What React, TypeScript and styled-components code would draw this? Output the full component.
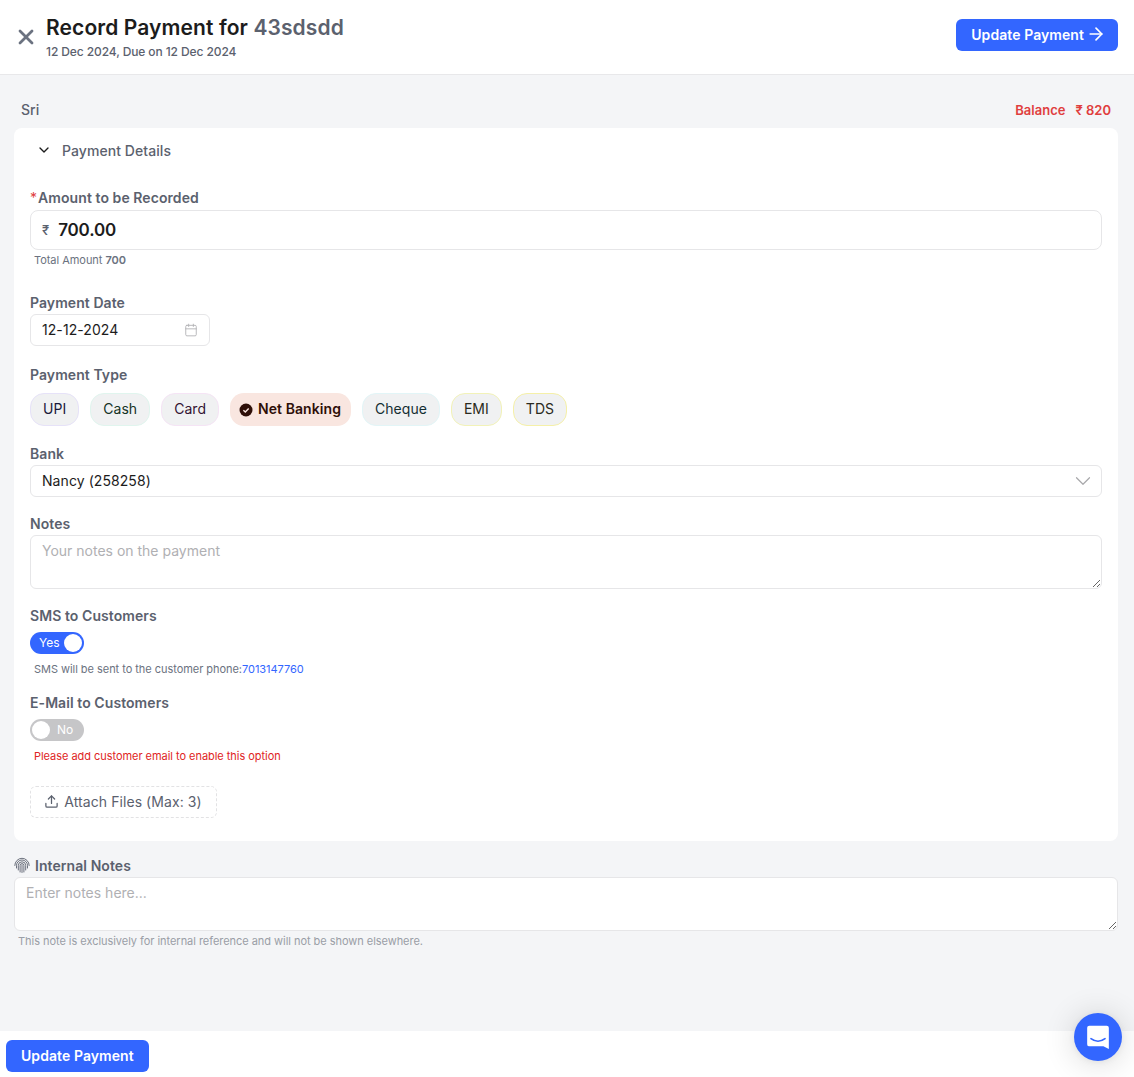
import React from "react";
import styled, { createGlobalStyle } from "styled-components";
import { ArrowRight, Calendar, ChevronDown, Upload, X } from "lucide-react";

const GlobalStyle = createGlobalStyle`
  * {
    box-sizing: border-box;
  }
  body {
    margin: 0;
    background: #f4f5f7;
    font-family: Inter, "Noto Sans", sans-serif;
    color: #1f1f1f;
  }
  input, textarea {
    font-family: Inter, "Noto Sans", sans-serif;
  }
  ::placeholder {
    color: #b0b0b3;
    opacity: 1;
  }
`;

const Page = styled.div`
  height: 1077px;
  display: flex;
  flex-direction: column;
  overflow: hidden;
  position: relative;
`;

const Header = styled.header`
  height: 75px;
  flex-shrink: 0;
  background: #fff;
  border-bottom: 1px solid #e8e8ea;
  display: flex;
  align-items: center;
  padding: 0 16px 0 14px;
`;

const CloseIcon = styled(X)`
  color: #6b7280;
  margin-right: 8px;
  margin-top: -1px;
`;

const TitleBlock = styled.div`
  flex: 1;
`;

const Title = styled.h1`
  margin: 0;
  font-size: 21px;
  line-height: 28px;
  font-weight: 600;
  letter-spacing: 0.1px;
  color: #1c1c1c;
`;

const TitleName = styled.span`
  color: #5b616e;
`;

const Subtitle = styled.div`
  margin-top: 2px;
  font-size: 12px;
  line-height: 16px;
  font-weight: 500;
  letter-spacing: -0.1px;
  color: #5b616e;
`;

const PrimaryButton = styled.button`
  height: 32px;
  padding: 0 15px 2px;
  display: inline-flex;
  align-items: center;
  border: none;
  border-radius: 6px;
  background: #3366ff;
  color: #fff;
  font-family: inherit;
  font-size: 14px;
  font-weight: 600;
  letter-spacing: 0.07px;
`;

const HeaderButton = styled(PrimaryButton)`
  gap: 2px;
  padding-right: 12px;
  margin-top: -4px;
`;

const Main = styled.main`
  flex: 1;
  padding: 0 16px 0 14px;
`;

const SummaryRow = styled.div`
  height: 53px;
  padding: 17px 7px 0;
  display: flex;
  justify-content: space-between;
  align-items: center;
`;

const CustomerName = styled.span`
  margin-top: -2px;
  font-size: 14px;
  font-weight: 500;
  color: #5b616e;
`;

const Balance = styled.span`
  font-size: 13px;
  font-weight: 600;
  color: #e03e3e;
  display: flex;
  gap: 10px;
`;

const Card = styled.section`
  background: #fff;
  border-radius: 8px;
  height: 713px;
  padding: 0 16px;
  letter-spacing: 0.07px;
`;

const SectionToggle = styled.div`
  height: 44px;
  padding-left: 6px;
  display: flex;
  align-items: center;
  gap: 10px;
  font-size: 14px;
  font-weight: 500;
  color: #5b616e;
`;

const ToggleIcon = styled(ChevronDown)`
  color: #1c1c1c;
`;

const Label = styled.label<{ $top: number }>`
  display: block;
  margin-top: ${(p) => p.$top}px;
  font-size: 14px;
  line-height: 20px;
  font-weight: 600;
  letter-spacing: 0.07px;
  color: #5b616e;
`;

const Required = styled.span`
  color: #e03e3e;
  font-weight: 400;
  margin-right: 1px;
`;

const AmountField = styled.div`
  height: 40px;
  margin-top: 2px;
  padding: 0 11px;
  border: 1px solid #e6e6e8;
  border-radius: 8px;
  display: flex;
  align-items: center;
  gap: 9px;
`;

const Rupee = styled.span`
  font-size: 13px;
  font-weight: 500;
  color: #5b616e;
`;

const AmountInput = styled.input`
  flex: 1;
  border: none;
  outline: none;
  padding: 0;
  font-size: 17px;
  font-weight: 600;
  letter-spacing: -0.2px;
  color: #1c1c1c;
`;

const Hint = styled.div<{ $tone?: "error"; $top: number }>`
  margin-top: ${(p) => p.$top}px;
  padding-left: 4px;
  font-size: 11px;
  line-height: 14px;
  letter-spacing: -0.04px;
  color: ${(p) => (p.$tone === "error" ? "#e02424" : "#6b7280")};
`;

const Strong = styled.b`
  font-weight: 600;
`;

const Phone = styled.span`
  color: #3366ff;
`;

const DateField = styled.div`
  width: 180px;
  height: 32px;
  margin-top: 1px;
  padding: 0 11px 2px;
  border: 1px solid #e6e6e8;
  border-radius: 6px;
  display: flex;
  align-items: center;
  justify-content: space-between;
  font-size: 14px;
  color: #1c1c1c;
`;

const CalendarIcon = styled(Calendar)`
  color: #b0b0b3;
  margin-bottom: -2px;
`;

const PillRow = styled.div`
  display: flex;
  gap: 11px;
  margin-top: 8px;
`;

const Pill = styled.div<{ $ring: string; $text: string }>`
  height: 33px;
  padding: 0 12px 2px;
  border-radius: 14px;
  display: flex;
  align-items: center;
  background: #f0f1f2;
  border: 1px solid ${(p) => p.$ring};
  color: ${(p) => p.$text};
  font-size: 14px;
  letter-spacing: 0.04px;
`;

const ActivePill = styled.div`
  height: 33px;
  padding: 0 10px 2px 9px;
  border-radius: 14px;
  display: flex;
  align-items: center;
  gap: 5px;
  background: #f9e6e0;
  color: #2e0f08;
  font-size: 14px;
  font-weight: 600;
`;

const CheckDot = styled.svg`
  width: 14px;
  height: 14px;
  margin-bottom: -2px;
`;

const SelectField = styled.div`
  height: 32px;
  margin-top: 1px;
  padding: 0 11px 2px;
  border: 1px solid #e6e6e8;
  border-radius: 6px;
  display: flex;
  align-items: center;
  justify-content: space-between;
  font-size: 14px;
  color: #1c1c1c;
`;

const SelectIcon = styled(ChevronDown)`
  color: #a8a8ab;
  margin-right: -6px;
  margin-bottom: -2px;
`;

const NoteArea = styled.textarea<{ $mt: number }>`
  display: block;
  width: 100%;
  height: 54px;
  margin-top: ${(p) => p.$mt}px;
  padding: 5px 11px;
  border: 1px solid #e6e6e8;
  border-radius: 6px;
  outline: none;
  font-size: 14px;
  line-height: 20px;
  background: #fff;
`;

const Switch = styled.div<{ $on: boolean }>`
  position: relative;
  width: 54px;
  height: 22px;
  margin-top: 6px;
  border-radius: 11px;
  background: ${(p) => (p.$on ? "#3366ff" : "#c6c6c8")};
  color: #fff;
  font-size: 12px;
  line-height: 22px;
  padding: ${(p) => (p.$on ? "0 0 0 9px" : "0 0 0 27px")};
`;

const SwitchThumb = styled.span<{ $on: boolean }>`
  position: absolute;
  top: 2px;
  left: ${(p) => (p.$on ? "34px" : "2px")};
  width: 18px;
  height: 18px;
  border-radius: 50%;
  background: #fff;
`;

const AttachButton = styled.div`
  width: 187px;
  height: 32px;
  margin-top: 23px;
  padding: 0 1px 2px 0;
  border: 1px dashed #e2e2e4;
  border-radius: 6px;
  display: flex;
  align-items: center;
  justify-content: center;
  gap: 5px;
  font-size: 14px;
  color: #5b616e;
`;

const InternalTitle = styled.div`
  height: 36px;
  padding-top: 13px;
  display: flex;
  align-items: center;
  gap: 5px;
  font-size: 14px;
  font-weight: 600;
  letter-spacing: 0.07px;
  color: #5b616e;
`;

const FingerprintMark = styled.svg`
  width: 16px;
  height: 16px;
  margin-top: -2px;
`;

const InternalHint = styled.div`
  margin-top: 3px;
  padding-left: 4px;
  font-size: 11px;
  line-height: 14px;
  letter-spacing: -0.04px;
  color: #9a9ea6;
`;

const Footer = styled.footer`
  height: 46px;
  flex-shrink: 0;
  background: #fff;
  padding: 9px 6px 0;
`;

const ChatBubble = styled.div`
  position: absolute;
  right: 12px;
  bottom: 16px;
  width: 48px;
  height: 48px;
  border-radius: 50%;
  background: #3366ff;
  box-shadow: 0 1px 6px rgba(0, 0, 0, 0.06), 0 2px 32px rgba(0, 0, 0, 0.16);
  display: flex;
  align-items: center;
  justify-content: center;
`;

const pills = [
  { name: "UPI", ring: "#e6e2f8", text: "#1a1a3a" },
  { name: "Cash", ring: "#e0f5ee", text: "#143326" },
  { name: "Card", ring: "#f5e4f5", text: "#331433" },
  { name: "Net Banking" },
  { name: "Cheque", ring: "#e2f5f7", text: "#142e33" },
  { name: "EMI", ring: "#f2f2b8", text: "#2a2a20" },
  { name: "TDS", ring: "#f5f0a8", text: "#2a2a20" },
];

export default function App() {
  return (
    <Page>
      <GlobalStyle />
      <Header>
        <CloseIcon size={24} strokeWidth={2.8} />
        <TitleBlock>
          <Title>
            Record Payment for <TitleName>43sdsdd</TitleName>
          </Title>
          <Subtitle>12 Dec 2024, Due on 12 Dec 2024</Subtitle>
        </TitleBlock>
        <HeaderButton>
          Update Payment <ArrowRight size={20} strokeWidth={2} />
        </HeaderButton>
      </Header>

      <Main>
        <SummaryRow>
          <CustomerName>Sri</CustomerName>
          <Balance>
            <span>Balance</span>
            <span>₹ 820</span>
          </Balance>
        </SummaryRow>

        <Card>
          <SectionToggle>
            <ToggleIcon size={16} strokeWidth={2} />
            Payment Details
          </SectionToggle>

          <Label $top={16}>
            <Required>*</Required>Amount to be Recorded
          </Label>
          <AmountField>
            <Rupee>₹</Rupee>
            <AmountInput defaultValue="700.00" />
          </AmountField>
          <Hint $top={3}>
            Total Amount <Strong>700</Strong>
          </Hint>

          <Label $top={26}>Payment Date</Label>
          <DateField>
            12-12-2024
            <CalendarIcon size={14} strokeWidth={1.5} />
          </DateField>

          <Label $top={19}>Payment Type</Label>
          <PillRow>
            {pills.map((p) =>
              p.ring ? (
                <Pill key={p.name} $ring={p.ring} $text={p.text}>
                  {p.name}
                </Pill>
              ) : (
                <ActivePill key={p.name}>
                  <CheckDot viewBox="0 0 14 14">
                    <circle cx="7" cy="7" r="6.5" fill="#2e0f08" />
                    <path d="M4.4 7.2l1.9 1.8 3.4-3.6" fill="none" stroke="#f9e6e0" strokeWidth="1.4" />
                  </CheckDot>
                  {p.name}
                </ActivePill>
              )
            )}
          </PillRow>

          <Label $top={18}>Bank</Label>
          <SelectField>
            Nancy (258258)
            <SelectIcon size={26} strokeWidth={1.1} />
          </SelectField>

          <Label $top={17}>Notes</Label>
          <NoteArea $mt={1} placeholder="Your notes on the payment" />

          <Label $top={17}>SMS to Customers</Label>
          <Switch $on>
            Yes
            <SwitchThumb $on />
          </Switch>
          <Hint $top={8}>
            SMS will be sent to the customer phone:<Phone>7013147760</Phone>
          </Hint>

          <Label $top={17}>E-Mail to Customers</Label>
          <Switch $on={false}>
            No
            <SwitchThumb $on={false} />
          </Switch>
          <Hint $top={8} $tone="error">
            Please add customer email to enable this option
          </Hint>

          <AttachButton>
            <Upload size={15} strokeWidth={2} />
            Attach Files (Max: 3)
          </AttachButton>
        </Card>

        <InternalTitle>
          <FingerprintMark viewBox="0 0 16 16" fill="none" stroke="#5b616e" strokeWidth="0.9" strokeLinecap="round">
            <path d="M0.8 8.500a7.200 7.200 0 0 1 14.400 0" />
            <path d="M2.500 11V8.500a5.500 5.500 0 0 1 11 0V11" />
            <path d="M4.300 13V8.500a3.700 3.700 0 0 1 7.400 0V13" />
            <path d="M6.100 15V8.500a1.900 1.900 0 0 1 3.800 0V15" />
            <path d="M8 8v7.500" />
          </FingerprintMark>
          Internal Notes
        </InternalTitle>
        <NoteArea $mt={0} placeholder="Enter notes here..." />
        <InternalHint>This note is exclusively for internal reference and will not be shown elsewhere.</InternalHint>
      </Main>

      <Footer>
        <PrimaryButton>Update Payment</PrimaryButton>
      </Footer>

      <ChatBubble>
        <svg width="26" height="26" viewBox="0 0 24 24">
          <path
            d="M4 1.5h16a2 2 0 0 1 2 2v19.5l-5-2.4H4a2 2 0 0 1-2-2V3.500a2 2 0 0 1 2-2z"
            fill="#fff"
          />
          <path d="M5.500 13.500c4 3 9 3 13 0" fill="none" stroke="#3366ff" strokeWidth="1.500" strokeLinecap="round" />
        </svg>
      </ChatBubble>
    </Page>
  );
}
